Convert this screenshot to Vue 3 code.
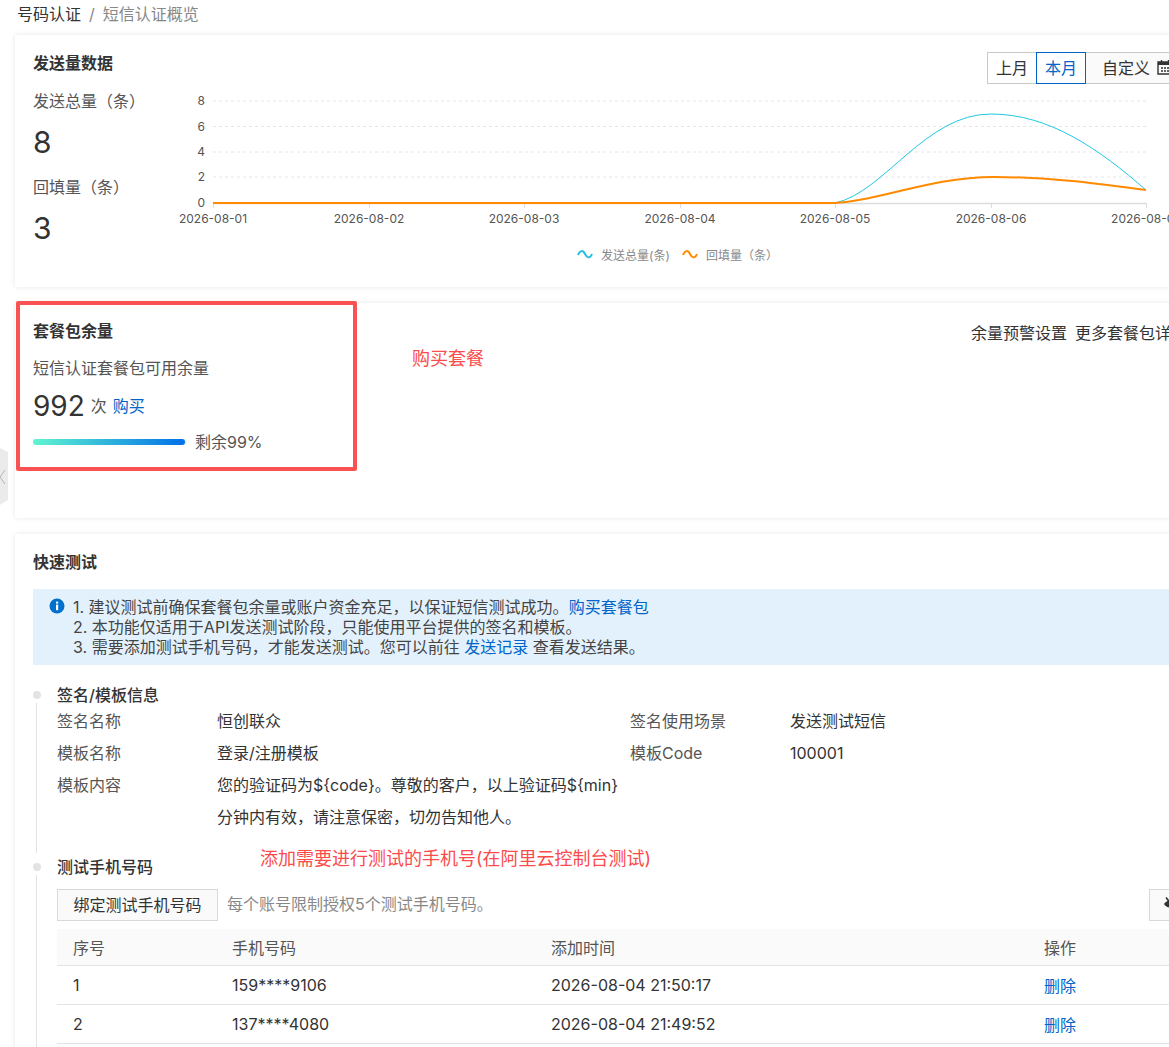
<script setup>
import { ref } from 'vue'

const ticks = [
  { x: 213, label: '2026-08-01' },
  { x: 369, label: '2026-08-02' },
  { x: 524, label: '2026-08-03' },
  { x: 680, label: '2026-08-04' },
  { x: 835, label: '2026-08-05' },
  { x: 991, label: '2026-08-06' },
  { x: 1146, label: '2026-08-07' }
]
const levels = [
  { y: 101, label: '8' },
  { y: 126.5, label: '6' },
  { y: 152, label: '4' },
  { y: 177, label: '2' }
]
const phones = ref([
  { id: 1, phone: '159****9106', time: '2026-08-04 21:50:17' },
  { id: 2, phone: '137****4080', time: '2026-08-04 21:49:52' }
])
</script>

<template>
  <div class="page">
    <div class="side-handle">
      <svg width="8" height="57" viewBox="0 0 8 57">
        <polygon points="0,0 8,4 8,52 0,57" fill="#ebebeb" />
        <path d="M5 22 L0 29 L5 36" fill="none" stroke="#b5b5b5" stroke-width="1" />
      </svg>
    </div>

    <div class="crumb">
      <span>号码认证</span>
      <i>/</i>
      <span class="crumb-cur">短信认证概览</span>
    </div>

    <section class="card">
      <div class="card-head">
        <h3>发送量数据</h3>
        <div class="seg">
          <button>上月</button>
          <button class="on">本月</button>
          <button class="custom">
            自定义
            <svg width="16" height="16" viewBox="0 0 16 16">
              <path d="M1 3h14v12H1z" fill="none" stroke="#333" stroke-width="1.4" />
              <path d="M1 3h14v3H1z" fill="#333" />
              <path d="M4.5 1v3M11.5 1v3M4 9h2M7 9h2M10 9h2M4 12h2M7 12h2M10 12h2" stroke="#333" stroke-width="1.4" />
            </svg>
          </button>
        </div>
      </div>
      <div class="send-body">
        <div class="stats">
          <div class="stat-label">发送总量（条）</div>
          <div class="stat-num">8</div>
          <div class="stat-label second">回填量（条）</div>
          <div class="stat-num">3</div>
        </div>
        <svg class="chart" width="1000" height="180" viewBox="170 90 1000 180">
          <line v-for="l in levels" :key="l.y" x1="213" x2="1146" :y1="l.y" :y2="l.y" stroke="#e6e6e6" stroke-dasharray="3 3" />
          <text v-for="l in levels" :key="l.label" x="205" :y="l.y + 4" text-anchor="end" class="ax">{{ l.label }}</text>
          <text x="205" y="207" text-anchor="end" class="ax">0</text>
          <line x1="213" x2="1146" y1="203.5" y2="203.5" stroke="#dcdcdc" stroke-width="1.5" />
          <line v-for="t in ticks" :key="t.x" :x1="t.x + 0.5" :x2="t.x + 0.5" y1="203" y2="208" stroke="#dcdcdc" />
          <text v-for="t in ticks" :key="t.label" :x="t.x" y="223" text-anchor="middle" class="ax">{{ t.label }}</text>
          <path d="M835 203 C885 192 925 114 991 114 C1050 114 1100 150 1146 190" fill="none" stroke="#1fc8e3" stroke-width="1" />
          <path d="M213 203 H835 C880 201 930 177 994 177 C1050 177 1100 184 1146 190" fill="none" stroke="#ff8a00" stroke-width="2" />
          <path d="M578 255 C580 250 583 250 585 254 C587 258 590 259 592 254" fill="none" stroke="#1fc0e0" stroke-width="2" />
          <text x="601" y="260" class="lg">发送总量(条)</text>
          <path d="M683 255 C685 250 688 250 690 254 C692 258 695 259 697 254" fill="none" stroke="#ff8a00" stroke-width="2" />
          <text x="706" y="260" class="lg">回填量（条）</text>
        </svg>
      </div>
    </section>

    <section class="card pack">
      <div class="card-head">
        <h3>套餐包余量</h3>
        <div class="pack-links">
          <span>余量预警设置</span>
          <span>更多套餐包详情</span>
        </div>
      </div>
      <div class="pack-sub">短信认证套餐包可用余量</div>
      <div class="pack-count">
        <b>992</b>
        <span>次</span>
        <a>购买</a>
      </div>
      <div class="pack-bar">
        <div class="bar-track"><div class="bar-fill" :style="{ width: '99%' }"></div></div>
        <span>剩余99%</span>
      </div>
      <div class="red-box"></div>
      <div class="note note-buy">购买套餐</div>
    </section>

    <section class="card test">
      <h3>快速测试</h3>
      <div class="alert">
        <svg class="alert-icon" width="16" height="16" viewBox="0 0 16 16">
          <circle cx="8" cy="8" r="7.5" fill="#0070cc" />
          <rect x="7" y="6.6" width="2.2" height="5.6" fill="#fff" />
          <rect x="7" y="3.6" width="2.2" height="2" fill="#fff" />
        </svg>
        <div>
          <div>1. 建议测试前确保套餐包余量或账户资金充足，以保证短信测试成功。<a>购买套餐包</a></div>
          <div>2. 本功能仅适用于API发送测试阶段，只能使用平台提供的签名和模板。</div>
          <div>3. 需要添加测试手机号码，才能发送测试。您可以前往 <a>发送记录</a> 查看发送结果。</div>
        </div>
      </div>

      <div class="step">
        <h4>签名/模板信息</h4>
        <div class="info">
          <label>签名名称</label><div>恒创联众</div>
          <label>签名使用场景</label><div>发送测试短信</div>
          <label>模板名称</label><div>登录/注册模板</div>
          <label>模板Code</label><div>100001</div>
          <label>模板内容</label>
          <div class="tpl">您的验证码为${code}。尊敬的客户，以上验证码${min}分钟内有效，请注意保密，切勿告知他人。</div>
        </div>
      </div>

      <div class="step step-last">
        <h4>测试手机号码</h4>
        <div class="note note-add">添加需要进行测试的手机号(在阿里云控制台测试)</div>
        <div class="tools">
          <button>绑定测试手机号码</button>
          <span>每个账号限制授权5个测试手机号码。</span>
          <button class="eye">
            <svg width="16" height="16" viewBox="0 0 16 16">
              <path d="M1 8 C4 3 12 3 15 8 C12 13 4 13 1 8Z" fill="#333" />
              <circle cx="8" cy="8" r="1.6" fill="#fff" />
              <path d="M3 1.5 L13 14.5" stroke="#333" stroke-width="1.6" />
            </svg>
          </button>
        </div>
        <table>
          <colgroup>
            <col style="width:159px" />
            <col style="width:319px" />
            <col style="width:493px" />
            <col />
          </colgroup>
          <thead>
            <tr><th>序号</th><th>手机号码</th><th>添加时间</th><th>操作</th></tr>
          </thead>
          <tbody>
            <tr v-for="p in phones" :key="p.id">
              <td>{{ p.id }}</td>
              <td>{{ p.phone }}</td>
              <td>{{ p.time }}</td>
              <td><a>删除</a></td>
            </tr>
          </tbody>
        </table>
      </div>
    </section>
  </div>
</template>

<style scoped>
.page {
  position: relative;
  width: 1169px;
  height: 1047px;
  overflow: hidden;
  padding-left: 15px;
  box-sizing: border-box;
  background: #fff;
  color: #333;
  font-family: Inter, "Noto Sans CJK SC", sans-serif;
  font-size: 16px;
}

.side-handle {
  position: absolute;
  left: 0;
  top: 448px;
  line-height: 0;
}

.crumb {
  height: 28px;
  line-height: 28px;
  margin-bottom: 7px;
  padding-left: 2px;
  color: #333;
}

.crumb i {
  font-style: normal;
  color: #888;
  margin: 0 8px;
}

.crumb-cur {
  color: #888;
}

.card {
  position: relative;
  width: 1190px;
  box-sizing: border-box;
  padding: 17px 18px;
  margin-bottom: 16px;
  background: #fff;
  box-shadow: 0 0 5px rgba(0, 0, 0, 0.1);
}

h3 {
  margin: 0;
  font-size: 16px;
  line-height: 22px;
  font-weight: 700;
}

.card-head {
  display: flex;
  justify-content: space-between;
  align-items: flex-start;
}

.seg {
  display: flex;
  height: 32px;
}

.seg button {
  width: 50px;
  height: 32px;
  margin-left: -1px;
  padding: 0 0 2px;
  background: #fff;
  border: 1px solid #c8c8c8;
  color: #333;
  font: inherit;
}

.seg button.on {
  position: relative;
  border-color: #0064c8;
  color: #0064c8;
}

.seg button.custom {
  width: 102px;
  background: #fafafa;
  display: flex;
  align-items: center;
  padding-left: 16px;
  gap: 7px;
}

.send-body {
  display: flex;
  margin-top: 5px;
}

.stats {
  width: 137px;
  flex: none;
}

.stat-label {
  line-height: 24px;
  color: #555;
}

.stat-label.second {
  margin-top: 13px;
}

.stat-num {
  margin-top: 9px;
  font-size: 30px;
  line-height: 40px;
}

.chart {
  flex: none;
  display: block;
  margin-top: 1px;
}

.ax {
  font-size: 12px;
  fill: #555;
}

.lg {
  font-size: 12px;
  fill: #888;
}

.pack {
  height: 215px;
}

.pack-links {
  display: flex;
  gap: 8px;
  line-height: 26px;
}

.pack-sub {
  margin-top: 10px;
  line-height: 24px;
  color: #555;
}

.pack-count {
  margin-top: 6px;
  display: flex;
  align-items: center;
  height: 40px;
  line-height: 40px;
  color: #555;
}

.pack-count b {
  font-size: 28px;
  font-weight: 400;
  color: #333;
  margin-right: 6px;
}

.pack-count a {
  margin-left: 6px;
}

a {
  color: #0064c8;
}

.pack-bar {
  margin-top: 4px;
  display: flex;
  align-items: center;
  gap: 8px;
  color: #555;
  line-height: 24px;
}

.bar-track {
  width: 154px;
  height: 6px;
  border-radius: 3px;
  background: #eee;
}

.bar-fill {
  height: 100%;
  border-radius: 3px;
  background: linear-gradient(90deg, #5ff5d0, #0070e8);
}

.red-box {
  position: absolute;
  left: 1px;
  top: -2px;
  width: 341px;
  height: 170px;
  box-sizing: border-box;
  border: 4px solid #fa5252;
  border-radius: 2px;
}

.note {
  position: absolute;
  color: #fb4b4b;
  font-size: 18px;
  line-height: 24px;
  white-space: nowrap;
}

.note-buy {
  left: 397px;
  top: 44px;
}

.note-add {
  left: 227px;
  top: -9px;
}

.test {
  margin-bottom: 0;
}

.alert {
  display: flex;
  margin-top: 16px;
  padding: 8px 0 8px 16px;
  background: #e3f1fd;
  line-height: 20px;
  color: #444;
}

.alert-icon {
  flex: none;
  margin: 1px 8px 0 0;
}

.step {
  position: relative;
  margin-top: 19px;
  padding-left: 24px;
}

.step::before {
  content: "";
  position: absolute;
  left: 0;
  top: 7px;
  width: 8px;
  height: 8px;
  border-radius: 50%;
  background: #e3e3e3;
}

.step::after {
  content: "";
  position: absolute;
  left: 3px;
  top: 19px;
  bottom: -20px;
  width: 1px;
  background: #e3e3e3;
}

.step-last {
  margin-top: 23px;
}

h4 {
  margin: 0;
  font-size: 16px;
  line-height: 22px;
  font-weight: 500;
}

.info {
  display: grid;
  grid-template-columns: 160px 413px 160px 1fr;
  line-height: 32px;
  margin-top: -1px;
}

.info label {
  color: #555;
}

.tpl {
  width: 405px;
}

.tools {
  display: flex;
  align-items: center;
  gap: 9px;
  margin-top: 11px;
  color: #888;
}

.tools span {
  margin-bottom: 4px;
}

.tools button {
  height: 32px;
  width: 161px;
  padding: 0 0 2px;
  border: 1px solid #d9d9d9;
  background: #fafafa;
  color: #333;
  font: inherit;
}

.tools button.eye {
  width: 38px;
  margin-left: auto;
  padding-left: 6px;
  display: flex;
  align-items: center;
  justify-content: center;
}

table {
  width: 100%;
  margin-top: 8px;
  border-collapse: collapse;
  table-layout: fixed;
}

th {
  height: 36px;
  padding: 0 16px;
  text-align: left;
  font-weight: 400;
  color: #555;
  background: #fafafa;
  border-bottom: 1px solid #e3e3e3;
}

td {
  height: 38px;
  padding: 0 16px;
  border-bottom: 1px solid #e3e3e3;
}
</style>

<style>
body {
  background: #fff;
}
</style>
